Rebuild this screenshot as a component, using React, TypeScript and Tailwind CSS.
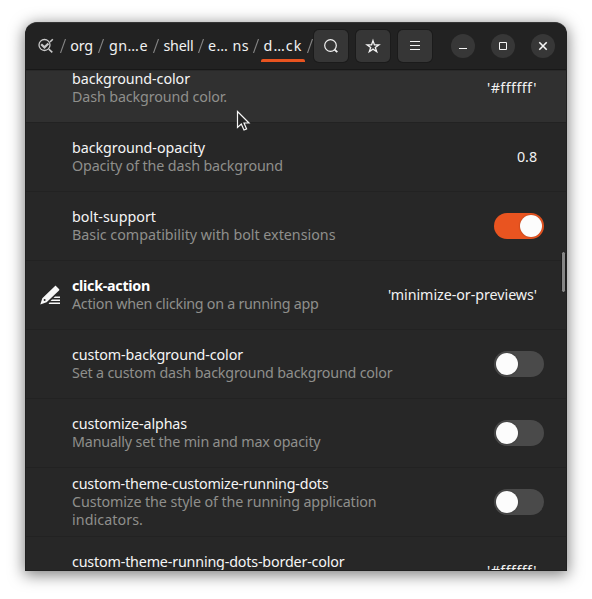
import { useLayoutEffect, useRef, useState } from 'react';
import type { ReactNode } from 'react';

// Text whose tracking is adjusted so that it occupies a given width.
function Fit({ text, width, className = '' }: { text: string; width: number; className?: string }) {
  const ref = useRef<HTMLSpanElement>(null);
  const [tracking, setTracking] = useState(0);
  useLayoutEffect(() => {
    if (ref.current) {
      const natural = ref.current.getBoundingClientRect().width;
      setTracking((width - natural) / text.length);
    }
  }, [text, width]);
  return (
    <span className={`block leading-[18px] ${className}`}>
      <span ref={ref} className="whitespace-pre" style={{ letterSpacing: tracking }}>
        {text}
      </span>
    </span>
  );
}

type Line = [string, number];
interface Setting {
  name: Line;
  summary: Line[];
  value?: Line;
  on?: boolean;
  edited?: boolean;
  hovered?: boolean;
}

const settings: Setting[] = [
  { name: ['background-color', 118], summary: [['Dash background color.', 155]], value: ["'#ffffff'", 50], hovered: true },
  { name: ['background-opacity', 133], summary: [['Opacity of the dash background', 211]], value: ['0.8', 20] },
  { name: ['bolt-support', 84], summary: [['Basic compatibility with bolt extensions', 263.5]], on: true },
  { name: ['click-action', 78], summary: [['Action when clicking on a running app', 246.5]], value: ["'minimize-or-previews'", 149], edited: true },
  { name: ['custom-background-color', 171], summary: [['Set a custom dash background background color', 320.5]], on: false },
  { name: ['customize-alphas', 115], summary: [['Manually set the min and max opacity', 248.5]], on: false },
  { name: ['custom-theme-customize-running-dots', 256.5], summary: [['Customize the style of the running application', 304.5], ['indicators.', 71]], on: false },
  { name: ['custom-theme-running-dots-border-color', 272.5], summary: [], value: ["'#ffffff'", 50] },
];

function Toggle({ on }: { on: boolean }) {
  return (
    <div className={`flex h-[26px] w-[50px] shrink-0 items-center rounded-full px-[2px] ${on ? 'justify-end bg-[#e95420]' : 'bg-[#4a4a4a]'}`}>
      <div className="size-[22px] rounded-full bg-[#fcfcfc] shadow-[0_0_2px_rgba(0,0,0,0.3)]" />
    </div>
  );
}

function Pencil() {
  return (
    <svg width="20" height="20" viewBox="0 0 20 20" fill="#f7f7f7">
      <path d="M.3 19.500 2.300 13.200 14.800 1.200c.5-.5.9-.5 1.400 0L19 4c.5.500.5.900 0 1.400L6.600 17.200Z" />
      <circle cx="4.600" cy="15" r="1" fill="#272727" />
      <path d="M15 11.500H20V13H13.500ZM12 14.500H20V16H10.500ZM9.500 17.500H20V19H8.500Z" />
    </svg>
  );
}

function Row({ s }: { s: Setting }) {
  return (
    <div className={`flex h-[69px] shrink-0 items-center border-b border-[#222222] ${s.hovered ? 'bg-[#303030]' : ''}`}>
      <div className="flex w-[46px] shrink-0 pl-[14px]">{s.edited && <Pencil />}</div>
      <div className="min-w-0 grow">
        <Fit text={s.name[0]} width={s.name[1]} className={s.edited ? 'font-bold text-white' : 'text-[#f5f5f5]'} />
        {s.summary.map(([text, width]) => (
          <Fit key={text} text={text} width={width} className="text-[#8f8f8c]" />
        ))}
        {s.summary.length === 0 && <div className="h-[18px]" />}
      </div>
      {s.value ? (
        <div className="shrink-0 pr-[29px]">
          <Fit text={s.value[0]} width={s.value[1]} className="text-[#f2f2f2]" />
        </div>
      ) : (
        <div className="shrink-0 pr-[22px]"><Toggle on={!!s.on} /></div>
      )}
    </div>
  );
}

function Slash() {
  return (
    <svg className="shrink-0" width="6" height="14" viewBox="0 0 6 14" stroke="#868686" strokeWidth="1.1">
      <path d="M5.500 0 .5 14" />
    </svg>
  );
}

function Tool({ children }: { children: ReactNode }) {
  return (
    <div className="flex h-[32px] w-[34px] shrink-0 items-center justify-center rounded-[5px] bg-[#363636] shadow-[0_0_0_1px_#1b1b1b]">
      {children}
    </div>
  );
}

function Control({ children }: { children: ReactNode }) {
  return <div className="flex size-6 shrink-0 items-center justify-center rounded-full bg-[#373737]">{children}</div>;
}

const crumbs: { text: string; width: number; cell: string }[] = [
  { text: 'org', width: 22.5, cell: 'w-[32px] pr-px' },
  { text: 'gn…e', width: 39, cell: 'w-[49px]' },
  { text: 'shell', width: 30, cell: 'w-[39px]' },
  { text: 'e… ns', width: 41, cell: 'w-[49px]' },
  { text: 'd…ck', width: 39, cell: 'w-[48px]' },
];

export default function App() {
  return (
    <div className="h-[599px] w-[592px] overflow-hidden bg-white pl-[25px] pt-[22px] font-['Noto_Sans',sans-serif] text-[14.3px]">
      <div className="relative flex h-[549px] w-[542px] flex-col overflow-hidden rounded-t-[12px] border border-[#202020] border-t-[#353535] bg-[#272727] shadow-[0_3px_15px_1px_rgba(0,0,0,0.5)]">
        <header className="flex h-[47px] shrink-0 items-center border-b border-[#181818] bg-[#222222]">
          <svg className="ml-[12px] mr-[6px] shrink-0" width="16" height="16" viewBox="0 0 16 16" fill="none" stroke="#c8c8c8">
            <circle cx="6.500" cy="7" r="5.500" strokeWidth="1.300" />
            <path d="m3.200 6.200 3.300 3.200 3.900-3.900" strokeWidth="2.200" />
            <path d="m12 4 2.800-2.800M10.800 11.200l3.500 3.200" strokeWidth="1.600" />
          </svg>
          {crumbs.map((c, i) => (
            <div key={c.text} className="flex shrink-0 items-center">
              <Slash />
              <div className={`relative flex h-8 items-center justify-center ${c.cell}`}>
                <Fit text={c.text} width={c.width} className="text-[#f2f2f2]" />
                {i === 4 && <div className="absolute bottom-0 left-[2px] h-[3px] w-[44px] rounded-t-[2px] bg-[#e95420]" />}
              </div>
            </div>
          ))}
          <Slash />
          <div className="ml-auto flex shrink-0 items-center gap-2 pr-[11px]">
            <Tool>
              <svg width="16" height="16" viewBox="0 0 16 16" fill="none" stroke="#f2f2f2" strokeWidth="1.200">
                <circle cx="7.500" cy="7.500" r="5.800" />
                <path d="m11.600 11.600 2.700 2.500" strokeWidth="1.900" />
              </svg>
            </Tool>
            <Tool>
              <svg width="16" height="16" viewBox="0 0 16 16" fill="none" stroke="#f2f2f2" strokeWidth="1.300">
                <path d="m8 2.600 1.400 4.200h4.500L10.300 9.400l1.400 4.300L8 11.100l-3.700 2.600 1.400-4.300L2.100 6.800h4.500Z" />
              </svg>
            </Tool>
            <Tool>
              <svg width="16" height="16" viewBox="0 0 16 16" stroke="#f2f2f2">
                <path d="M3 3.500h10M3 7.500h10M3 11.500h10" />
              </svg>
            </Tool>
            <div className="ml-[11px] flex gap-4">
              <Control>
                <svg width="16" height="16" viewBox="0 0 16 16" stroke="#f5f5f5"><path d="M4 10.500h8" /></svg>
              </Control>
              <Control>
                <svg width="16" height="16" viewBox="0 0 16 16" fill="none" stroke="#f5f5f5"><path d="M4.500 4.500h7v7h-7Z" /></svg>
              </Control>
              <Control>
                <svg width="16" height="16" viewBox="0 0 16 16" stroke="#f5f5f5" strokeWidth="1.600"><path d="m4.300 4.300 7.400 7.400m0-7.400-7.400 7.400" /></svg>
              </Control>
            </div>
          </div>
        </header>
        <main className="min-h-0 grow overflow-hidden border-t border-[#292929]">
          <div className="-mt-[17px] flex flex-col">
            {settings.map((s) => <Row key={s.name[0]} s={s} />)}
          </div>
        </main>
        <div className="absolute right-0 top-[228px] h-[42px] w-[5px] rounded-full border border-[#1c1c1c] bg-[#858585]" />
        <svg className="absolute left-[210px] top-[87px]" width="15" height="22" viewBox="0 0 15 22">
          <path d="M1.500 1.500V17.500L5.300 14 8 20l2.600-1.100L8 13H13Z" fill="#242424" stroke="#f5f5f5" strokeWidth="1.200" />
        </svg>
      </div>
    </div>
  );
}
